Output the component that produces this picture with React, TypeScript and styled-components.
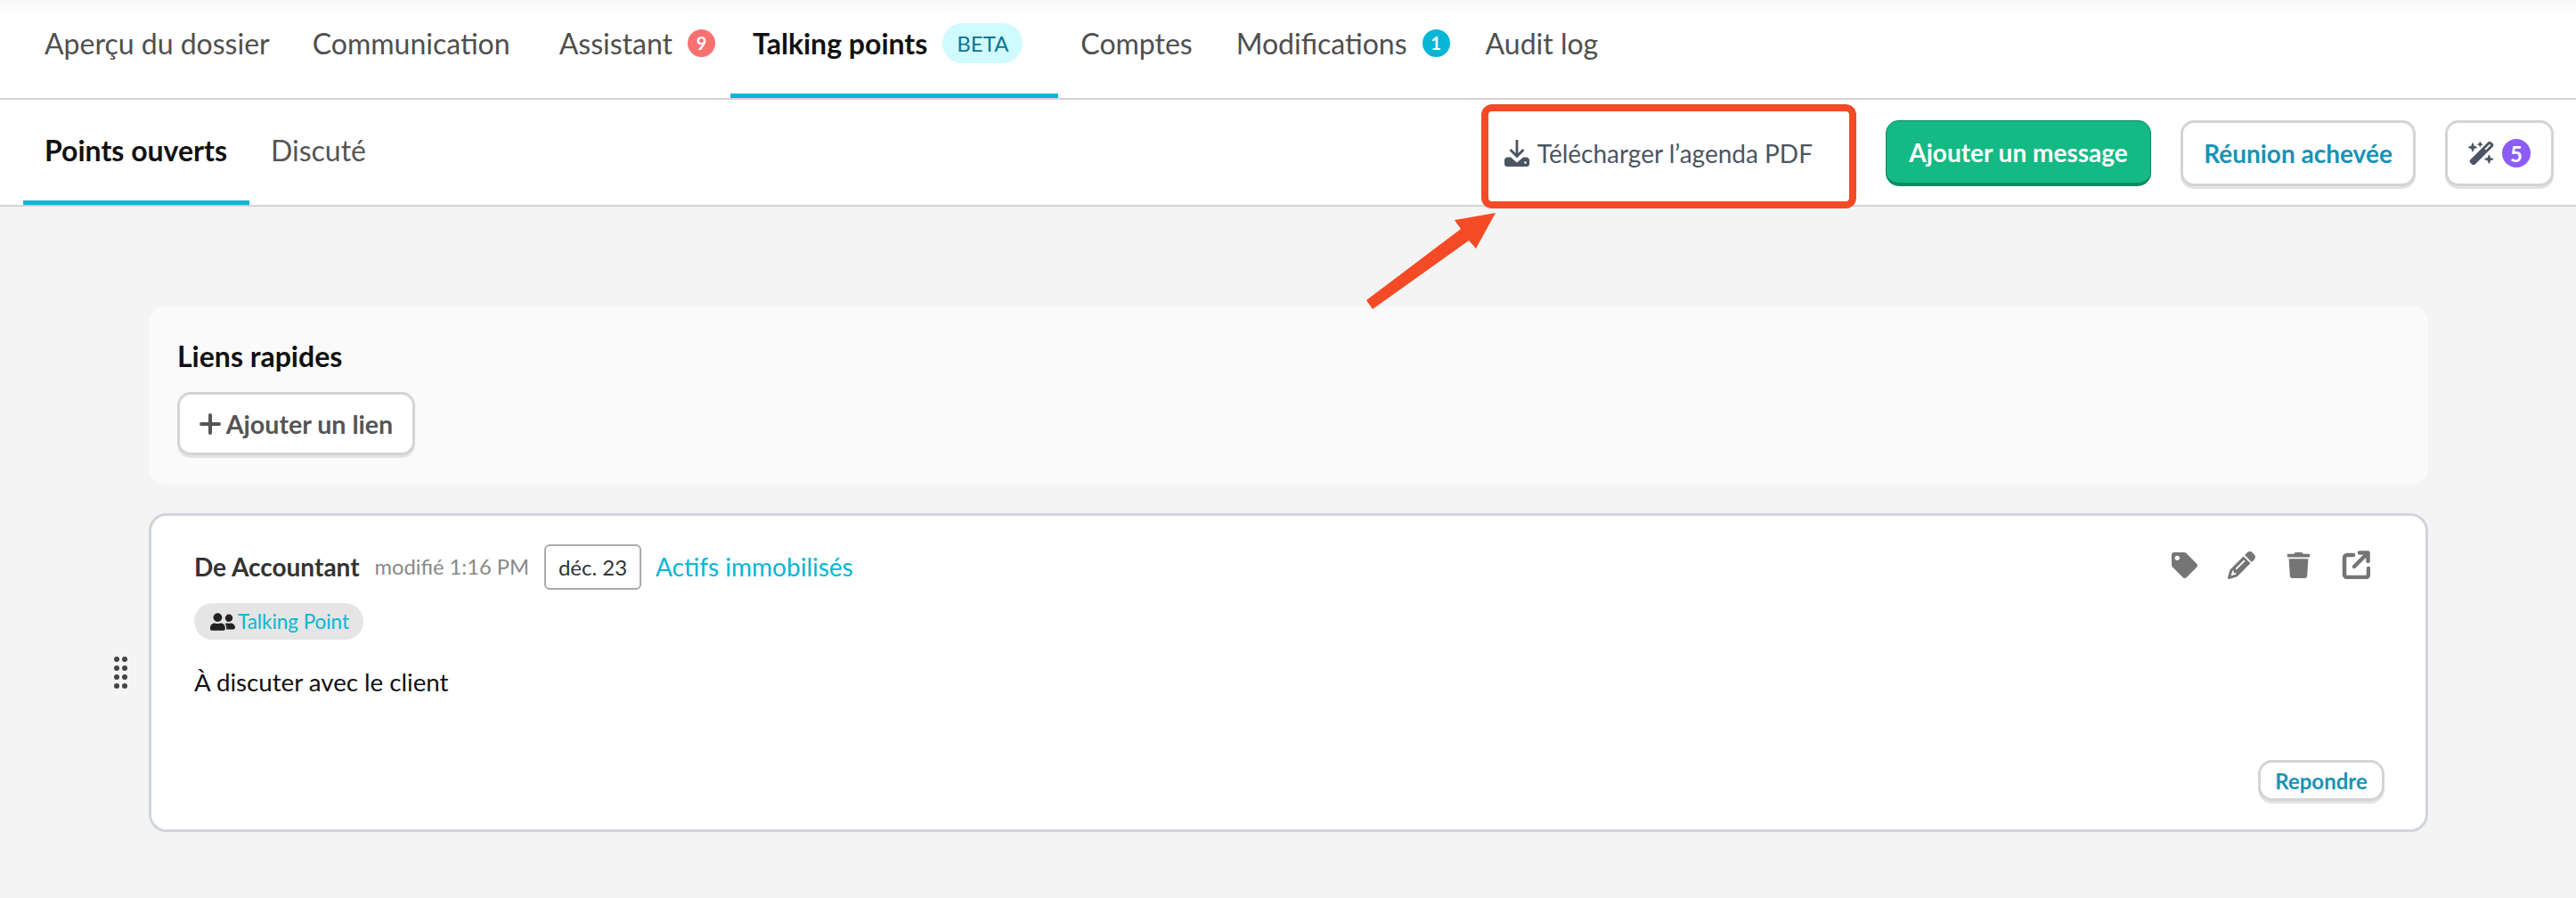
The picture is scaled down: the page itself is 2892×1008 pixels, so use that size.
import React from "react";
import styled, { createGlobalStyle } from "styled-components";
import { FaTag, FaTrash, FaUserFriends } from "react-icons/fa";
import { FaPencil, FaWandMagicSparkles } from "react-icons/fa6";

const Global = createGlobalStyle`
  html, body { margin: 0; padding: 0; background: #f4f4f4; }
  body { font-family: Lato, "Liberation Sans", sans-serif; }
  * { box-sizing: border-box; }
`;

const Page = styled.div`
  position: relative;
  width: 2892px;
  height: 1008px;
  overflow: hidden;
  display: flex;
  flex-direction: column;
  background: #f4f4f4;
`;

const TopNav = styled.nav`
  height: 112px;
  flex: none;
  display: flex;
  align-items: stretch;
  padding-left: 25px;
  background: linear-gradient(#f8f8f8 0, #fff 16px);
  border-bottom: 2px solid #d4d4d4;
`;

const Tab = styled.div<{ $active?: boolean; $pad?: number }>`
  display: flex;
  align-items: center;
  gap: 17px;
  height: 110px;
  padding: 0 ${(p) => p.$pad ?? 25}px 9px 25px;
  font-size: 32px;
  font-weight: ${(p) => (p.$active ? 700 : 400)};
  color: ${(p) => (p.$active ? "#111" : "#4f4f4f")};
  border-bottom: 5px solid ${(p) => (p.$active ? "#06b6d4" : "transparent")};
`;

const CountBadge = styled.span<{ $bg: string }>`
  width: 31px;
  height: 31px;
  border-radius: 50%;
  display: flex;
  align-items: center;
  justify-content: center;
  background: ${(p) => p.$bg};
  color: #fff;
  font-size: 20px;
  font-weight: 700;
`;

const BetaPill = styled.span`
  width: 90px;
  height: 45px;
  border-radius: 23px;
  background: #cffafe;
  color: #0e7490;
  font-size: 24px;
  font-weight: 400;
  display: flex;
  align-items: center;
  justify-content: center;
`;

const SubBar = styled.div`
  height: 120px;
  flex: none;
  display: flex;
  align-items: stretch;
  justify-content: space-between;
  background: #fff;
  border-bottom: 2px solid #d4d4d4;
  padding: 0 25px 0 26px;
`;

const SubTabs = styled.div`
  display: flex;
  align-items: stretch;
`;

const SubTab = styled.div<{ $active?: boolean }>`
  display: flex;
  align-items: center;
  padding: 0 25px 0 24px;
  font-size: 32px;
  font-weight: ${(p) => (p.$active ? 700 : 400)};
  color: ${(p) => (p.$active ? "#111" : "#555")};
  border-bottom: 5px solid ${(p) => (p.$active ? "#06b6d4" : "transparent")};
`;

const Actions = styled.div`
  display: flex;
  align-items: flex-start;
  padding-top: 23px;
`;

const PdfLink = styled.div`
  display: flex;
  align-items: center;
  gap: 9px;
  height: 74px;
  margin-right: 82px;
  font-size: 28px;
  color: #4b5563;
`;

const Button = styled.div<{ $variant?: "primary" | "teal" | "plain" }>`
  display: inline-flex;
  align-items: center;
  justify-content: center;
  height: 74px;
  border-radius: 15px;
  font-size: 28px;
  font-weight: 700;
  background: ${(p) => (p.$variant === "primary" ? "#14b984" : "#fff")};
  color: ${(p) =>
    p.$variant === "primary" ? "#fff" : p.$variant === "teal" ? "#1793b5" : "#555"};
  border: 3px solid ${(p) => (p.$variant === "primary" ? "#0b8a63" : "#d4d4d4")};
  border-top-width: ${(p) => (p.$variant === "primary" ? 1 : 3)}px;
  border-left-width: ${(p) => (p.$variant === "primary" ? 1 : 3)}px;
  border-right-width: ${(p) => (p.$variant === "primary" ? 1 : 3)}px;
  border-bottom-width: ${(p) => (p.$variant === "primary" ? 4 : 3)}px;
  box-shadow: ${(p) => (p.$variant === "primary" ? "none" : "0 3px 0 #e2e2e2")};
`;

const AddMessage = styled(Button)`
  width: 298px;
  margin-right: 33px;
`;

const DoneButton = styled(Button)`
  width: 264px;
  margin-right: 33px;
`;

const MagicButton = styled(Button)`
  width: 122px;
  gap: 8px;
  color: #4b5563;
`;

const PurpleBadge = styled.span`
  width: 32px;
  height: 32px;
  border-radius: 50%;
  background: #8b5cf6;
  color: #fff;
  font-size: 24px;
  font-weight: 700;
  display: flex;
  align-items: center;
  justify-content: center;
`;

const Main = styled.main`
  flex: 1;
  padding: 112px 166px 0 167px;
  display: flex;
  flex-direction: column;
  gap: 32px;
`;

const QuickLinks = styled.section`
  height: 200px;
  background: #fafafa;
  border-radius: 18px;
  padding: 37px 32px 0;
  display: flex;
  flex-direction: column;
  align-items: flex-start;
`;

const QuickTitle = styled.h2`
  margin: 0 0 21px;
  font-size: 32px;
  line-height: 38px;
  font-weight: 700;
  color: #111;
`;

const AddLink = styled(Button)`
  width: 267px;
  height: 71px;
  gap: 6px;
  font-size: 28.6px;
`;

const Card = styled.article`
  position: relative;
  height: 358px;
  background: #fff;
  border: 3px solid #d1d5db;
  border-radius: 20px;
  padding: 31px 48px 0;
`;

const Handle = styled.div`
  position: absolute;
  left: -42px;
  top: 158px;
  display: grid;
  grid-template-columns: 6px 6px;
  column-gap: 3px;
  row-gap: 4px;
`;

const Dot = styled.i`
  width: 6px;
  height: 6px;
  border-radius: 50%;
  background: #444;
`;

const CardHead = styled.div`
  display: flex;
  align-items: center;
  height: 52px;
`;

const Author = styled.span`
  font-size: 28px;
  font-weight: 700;
  color: #333;
  margin-right: 17px;
`;

const Edited = styled.span`
  font-size: 23.7px;
  color: #888;
  margin-right: 17px;
`;

const DateBox = styled.span`
  width: 109px;
  height: 51px;
  border: 2px solid #aaa;
  border-radius: 6px;
  display: flex;
  align-items: center;
  justify-content: center;
  font-size: 24px;
  color: #333;
  margin-right: 16px;
`;

const Category = styled.span`
  font-size: 28px;
  color: #06b6d4;
`;

const IconRow = styled.div`
  margin-left: auto;
  display: flex;
  align-items: center;
  gap: 34px;
  margin-right: 14px;
  margin-top: -4px;
  color: #757575;
`;

const Chip = styled.div`
  display: inline-flex;
  align-items: center;
  gap: 3px;
  height: 41px;
  margin-top: 15px;
  padding: 0 16px 0 18px;
  border-radius: 21px;
  background: #e5e5e5;
  color: #06b6d4;
  font-size: 22.4px;
  & svg { color: #222; }
`;

const Body = styled.p`
  margin: 26px 0 0;
  font-size: 27.7px;
  line-height: 44px;
  color: #111;
`;

const Reply = styled(Button)`
  position: absolute;
  right: 46px;
  bottom: 32px;
  width: 142px;
  height: 46px;
  border-radius: 16px;
  font-size: 24px;
`;

const RedBox = styled.div`
  position: absolute;
  left: 1663px;
  top: 117px;
  width: 421px;
  height: 117px;
  border: 8px solid #f44a25;
  border-radius: 12px;
`;

const ArrowSvg = styled.svg`
  position: absolute;
  left: 0;
  top: 0;
  pointer-events: none;
`;

const DownloadIcon = () => (
  <svg width="28" height="30" viewBox="0 0 28 30" fill="#4b5563">
    <path d="M12.6 0h2.8v15l5-5 2 2L14 20.4 5.600 12l2-2 5 5z" />
    <path d="M0 23c0-2 1.500-3.500 3.500-3.500H7l7 6 7-6h3.500c2 0 3.500 1.500 3.500 3.500v4c0 1.700-1.300 3-3 3H3c-1.700 0-3-1.300-3-3z" />
    <circle cx="23.500" cy="25.500" r="1.300" fill="#fff" />
  </svg>
);

const PlusIcon = () => (
  <svg width="24" height="24" viewBox="0 0 24 24" fill="none" stroke="#555" strokeWidth="4" strokeLinecap="round">
    <path d="M12 2v20M2 12h20" />
  </svg>
);

const ExternalIcon = () => (
  <svg width="32" height="32" viewBox="0 0 32 32" fill="none" stroke="#757575" strokeWidth="4.500" strokeLinecap="round" strokeLinejoin="round">
    <path d="M13 5H6a3 3 0 0 0-3 3v19a3 3 0 0 0 3 3h21a3 3 0 0 0 3-3v-7" />
    <path d="M14 18 29 3" />
    <path d="M20 2.500h9.500V12" />
  </svg>
);

export default function App() {
  return (
    <Page>
      <Global />
      <TopNav>
        <Tab $pad={23}>Aperçu du dossier</Tab>
        <Tab $pad={30}>Communication</Tab>
        <Tab $pad={17}>
          Assistant <CountBadge $bg="#f87171">9</CountBadge>
        </Tab>
        <Tab $active $pad={40}>
          Talking points <BetaPill>BETA</BetaPill>
        </Tab>
        <Tab $pad={24}>Comptes</Tab>
        <Tab $pad={15}>
          Modifications <CountBadge $bg="#06b6d4">1</CountBadge>
        </Tab>
        <Tab>Audit log</Tab>
      </TopNav>
      <SubBar>
        <SubTabs>
          <SubTab $active>Points ouverts</SubTab>
          <SubTab>Discuté</SubTab>
        </SubTabs>
        <Actions>
          <PdfLink>
            <DownloadIcon />
            Télécharger l’agenda PDF
          </PdfLink>
          <AddMessage $variant="primary">Ajouter un message</AddMessage>
          <DoneButton $variant="teal">Réunion achevée</DoneButton>
          <MagicButton $variant="plain">
            <FaWandMagicSparkles size={30} />
            <PurpleBadge>5</PurpleBadge>
          </MagicButton>
        </Actions>
      </SubBar>
      <Main>
        <QuickLinks>
          <QuickTitle>Liens rapides</QuickTitle>
          <AddLink $variant="plain">
            <PlusIcon />
            Ajouter un lien
          </AddLink>
        </QuickLinks>
        <Card>
          <Handle>
            {Array.from({ length: 8 }).map((_, i) => (
              <Dot key={i} />
            ))}
          </Handle>
          <CardHead>
            <Author>De Accountant</Author>
            <Edited>modifié 1:16 PM</Edited>
            <DateBox>déc. 23</DateBox>
            <Category>Actifs immobilisés</Category>
            <IconRow>
              <FaTag size={29} />
              <FaPencil size={31} />
              <FaTrash size={29} />
              <ExternalIcon />
            </IconRow>
          </CardHead>
          <Chip>
            <FaUserFriends size={28} />
            Talking Point
          </Chip>
          <Body>À discuter avec le client</Body>
          <Reply $variant="teal">Repondre</Reply>
        </Card>
      </Main>
      <RedBox />
      <ArrowSvg width="2892" height="1008" viewBox="0 0 2892 1008">
        <polygon
          fill="#f44a25"
          points="1679,239 1657,279 1649,270 1541,347 1534,337 1640,257 1633,247"
        />
      </ArrowSvg>
    </Page>
  );
}
